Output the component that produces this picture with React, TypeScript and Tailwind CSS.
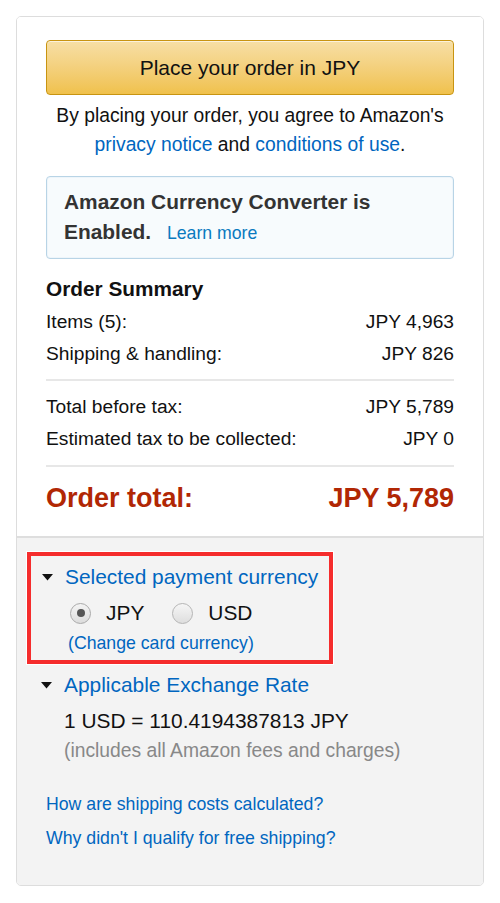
import React from "react";

function Caret() {
  return (
    <svg width="11" height="7" viewBox="0 0 11 7" className="shrink-0">
      <path d="M0 0 L11 0 L5.5 6.5 Z" fill="#111" />
    </svg>
  );
}

function Row({ l, r }: { l: string; r: string }) {
  return (
    <div className="flex justify-between h-[32px] items-center text-[19.2px] text-[#111]">
      <span>{l}</span>
      <span>{r}</span>
    </div>
  );
}

export default function App() {
  return (
    <div className="w-[500px] h-[903px] bg-white pt-[16px] px-[16px]" style={{ fontFamily: '"Liberation Sans", Arial, sans-serif' }}>
      <div className="w-[468px] border border-[#dddddd] rounded-[5px] overflow-hidden">
        <div className="bg-white px-[29px] pt-[23px] pb-[22px]">
          <button className="w-full h-[55px] rounded-[4px] border border-[#c89411] bg-gradient-to-b from-[#f7dfa5] to-[#f0c14b] text-[21px] text-[#111] shadow-[inset_0_1px_0_rgba(255,255,255,0.6)]">
            Place your order in JPY
          </button>
          <div className="text-center text-[19.3px] leading-[29px] text-[#111] mt-[6px]">
            <div>By placing your order, you agree to Amazon's</div>
            <div>
              <span className="text-[#0066c0]">privacy notice</span> and{" "}
              <span className="text-[#0066c0]">conditions of use</span>.
            </div>
          </div>
          <div className="mt-[17px] border border-[#b8d4e6] rounded-[4px] bg-[#f7fbfd] px-[17px] pt-[9px] pb-[10px] shadow-[inset_0_0_0_1px_#eef5fa]">
            <div className="text-[20.9px] font-bold text-[#333] leading-[31px]">Amazon Currency Converter is</div>
            <div className="text-[20.9px] font-bold text-[#333] leading-[29px]">
              Enabled. <span className="ml-[10px] text-[17.7px] font-normal text-[#0a7ac0]">Learn more</span>
            </div>
          </div>
          <div className="mt-[16px] mb-[3px] text-[20.8px] font-bold text-[#111] leading-[28px]">Order Summary</div>
          <Row l="Items (5):" r="JPY 4,963" />
          <Row l="Shipping & handling:" r="JPY 826" />
          <div className="h-[2px] bg-[#e7e7e7] mt-[9px] mb-[10px]" />
          <Row l="Total before tax:" r="JPY 5,789" />
          <Row l="Estimated tax to be collected:" r="JPY 0" />
          <div className="h-[2px] bg-[#e7e7e7] mt-[10px] mb-[15px]" />
          <div className="flex justify-between items-center text-[27px] font-bold text-[#b12704] h-[32px]">
            <span>Order total:</span>
            <span>JPY 5,789</span>
          </div>
        </div>
        <div className="bg-[#f3f3f3] border-t-2 border-[#dedede] pt-[14px] pb-[30px] px-[10px]">
          <div className="w-[306px] border-[4px] border-[#f52c2c] shadow-[0_0_0_1px_#ffffff] pl-[11px] pt-[8px] pb-[5px]">
            <div className="flex items-center gap-[12px] text-[20.9px] text-[#0066c0] h-[26px]">
              <Caret />
              <span>Selected payment currency</span>
            </div>
            <div className="flex items-center pl-[28px] mt-[9px] h-[28px] text-[20.9px] text-[#111]">
              <span className="w-[21px] h-[21px] rounded-full border border-[#a9a9a9] bg-gradient-to-b from-[#f4f4f4] to-[#dcdcdc] flex items-center justify-center">
                <span className="w-[8px] h-[8px] rounded-full bg-[#555]" />
              </span>
              <span className="ml-[15px]">JPY</span>
              <span className="ml-[28px] w-[21px] h-[21px] rounded-full border border-[#b5b5b5] bg-gradient-to-b from-[#f6f6f6] to-[#dedede]" />
              <span className="ml-[15px]">USD</span>
            </div>
            <div className="pl-[26px] text-[17.7px] text-[#0066c0] leading-[24px] mt-[4px]">(Change card currency)</div>
          </div>
          <div className="ml-[14px] mt-[8px] flex items-center gap-[12px] text-[20.9px] text-[#0066c0] h-[26px]">
            <Caret />
            <span>Applicable Exchange Rate</span>
          </div>
          <div className="ml-[37px] mt-[9px] text-[20.9px] text-[#111] leading-[28px]">1 USD = 110.4194387813 JPY</div>
          <div className="ml-[37px] mt-[1px] text-[19.3px] text-[#888] leading-[30px]">(includes all Amazon fees and charges)</div>
          <div className="ml-[19px] mt-[21px] text-[17.7px] text-[#0066c0] leading-[34px]">
            <div>How are shipping costs calculated?</div>
            <div>Why didn't I qualify for free shipping?</div>
          </div>
        </div>
      </div>
    </div>
  );
}
